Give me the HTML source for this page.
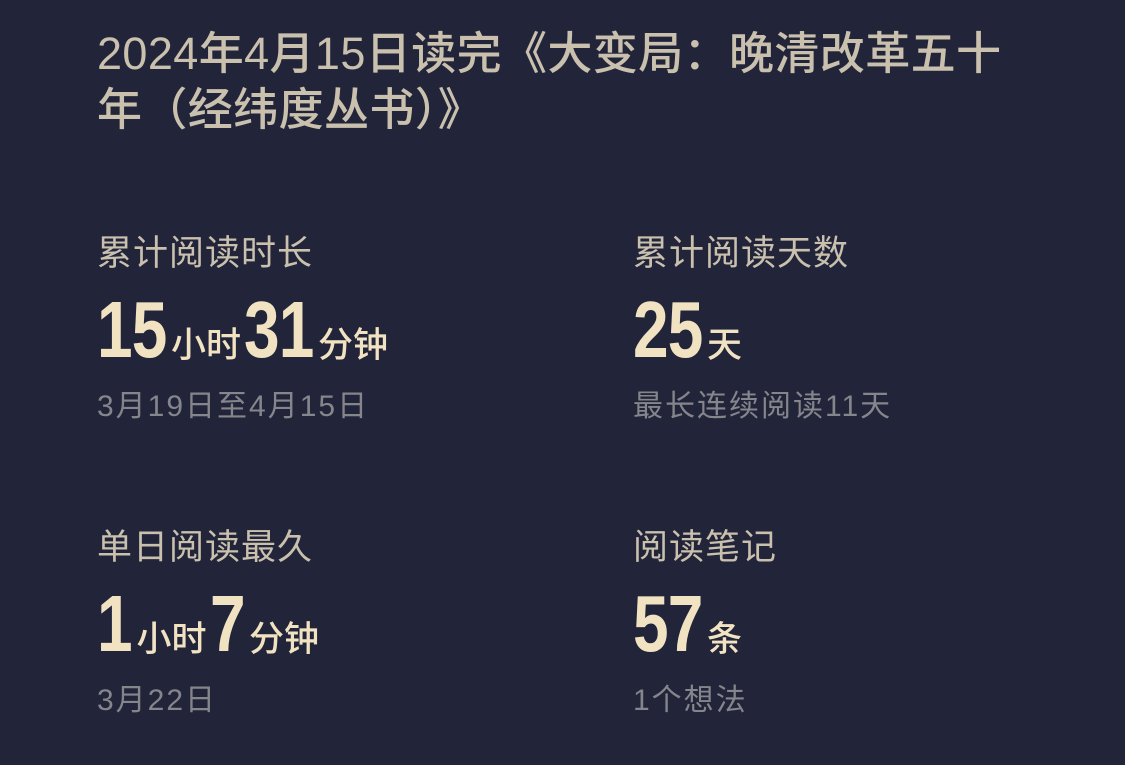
<!DOCTYPE html>
<html><head><meta charset="utf-8"><style>
body{margin:0;width:1125px;height:765px;background:#22243a;font-family:"Liberation Sans","Noto Sans CJK SC",sans-serif;overflow:hidden;position:relative}
.t{position:absolute;left:97px;top:26px;font-size:45px;line-height:56px;color:#c9c0ae;letter-spacing:0.4px;white-space:nowrap;font-weight:500}
.b{position:absolute}
.l{font-size:35px;color:#c9c0ae;line-height:40px;letter-spacing:1px;white-space:nowrap}
.n{color:#f1e3c2;white-space:nowrap;line-height:80px;margin-top:16px}
.n b{display:inline-block;transform:scaleX(.8);transform-origin:left;font-size:80px;font-weight:bold;letter-spacing:-1px}
.n b.d2{margin-right:-18px}
.n b.d1{margin-right:-9px}
.n span{font-size:35px;font-weight:500;margin-left:5px;margin-right:3px}
.s{font-size:30px;color:#85858c;line-height:36px;margin-top:-4px;white-space:nowrap;letter-spacing:2px}
</style></head><body>
<div class="t">2024年4月15日读完《大变局：晚清改革五十<br>年（经纬度丛书）》</div>
<div class="b" style="left:97px;top:234px"><div class="l">累计阅读时长</div><div class="n"><b class="d2">15</b><span>小时</span><b class="d2">31</b><span>分钟</span></div><div class="s">3月19日至4月15日</div></div>
<div class="b" style="left:633px;top:234px"><div class="l">累计阅读天数</div><div class="n"><b class="d2">25</b><span>天</span></div><div class="s">最长连续阅读11天</div></div>
<div class="b" style="left:97px;top:528px"><div class="l">单日阅读最久</div><div class="n"><b class="d1">1</b><span>小时</span><b class="d1">7</b><span>分钟</span></div><div class="s">3月22日</div></div>
<div class="b" style="left:633px;top:528px"><div class="l">阅读笔记</div><div class="n"><b class="d2">57</b><span>条</span></div><div class="s">1个想法</div></div>
</body></html>
